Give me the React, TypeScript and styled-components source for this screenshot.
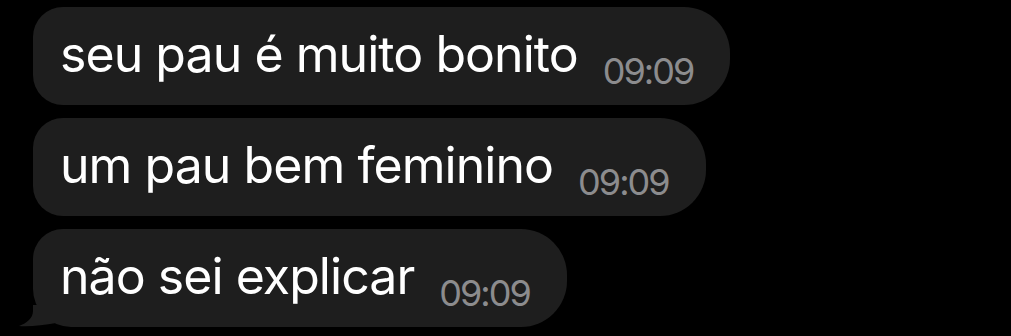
import React from "react";
import styled, { createGlobalStyle } from "styled-components";

const Global = createGlobalStyle`
  html, body {
    margin: 0;
    padding: 0;
    background: #000;
    width: 1011px;
    height: 336px;
    overflow: hidden;
  }
`;

const Thread = styled.div`
  display: flex;
  flex-direction: column;
  align-items: flex-start;
  gap: 13px;
  padding: 7px 0 0 33px;
  font-family: Inter, "Noto Sans", sans-serif;
`;

const Bubble = styled.div<{ $tail?: boolean }>`
  position: relative;
  display: flex;
  align-items: flex-start;
  box-sizing: border-box;
  height: 98px;
  padding: 0 37px 0 27px;
  background: #1e1e1e;
  border-radius: 30px 46px 46px ${(p) => (p.$tail ? "38px" : "30px")};
`;

const Text = styled.span`
  font-size: 50px;
  line-height: 50px;
  letter-spacing: -0.95px;
  padding-top: 22px;
  color: #fff;
  white-space: nowrap;
`;

const Time = styled.span`
  font-size: 36px;
  line-height: 36px;
  letter-spacing: -2px;
  margin-top: 46px;
  margin-left: 25px;
  color: #8c8c8e;
  white-space: nowrap;
`;

const Tail = styled.svg`
  position: absolute;
  left: -14px;
  bottom: 0;
  width: 40px;
  height: 22px;
  overflow: visible;
`;

const messages = [
  { text: "seu pau é muito bonito", time: "09:09" },
  { text: "um pau bem feminino", time: "09:09" },
  { text: "não sei explicar", time: "09:09" },
];

export default function App() {
  return (
    <>
      <Global />
      <Thread>
        {messages.map((m, i) => {
          const last = i === messages.length - 1;
          return (
            <Bubble key={i} $tail={last}>
              <Text>{m.text}</Text>
              <Time>{m.time}</Time>
              {last && (
                <Tail viewBox="0 0 40 22">
                  <path
                    d="M14,0 L14,6 C14,13 8,18 0,21 C10,22 25,20 37,18 L37,0 Z"
                    fill="#1e1e1e"
                  />
                </Tail>
              )}
            </Bubble>
          );
        })}
      </Thread>
    </>
  );
}
